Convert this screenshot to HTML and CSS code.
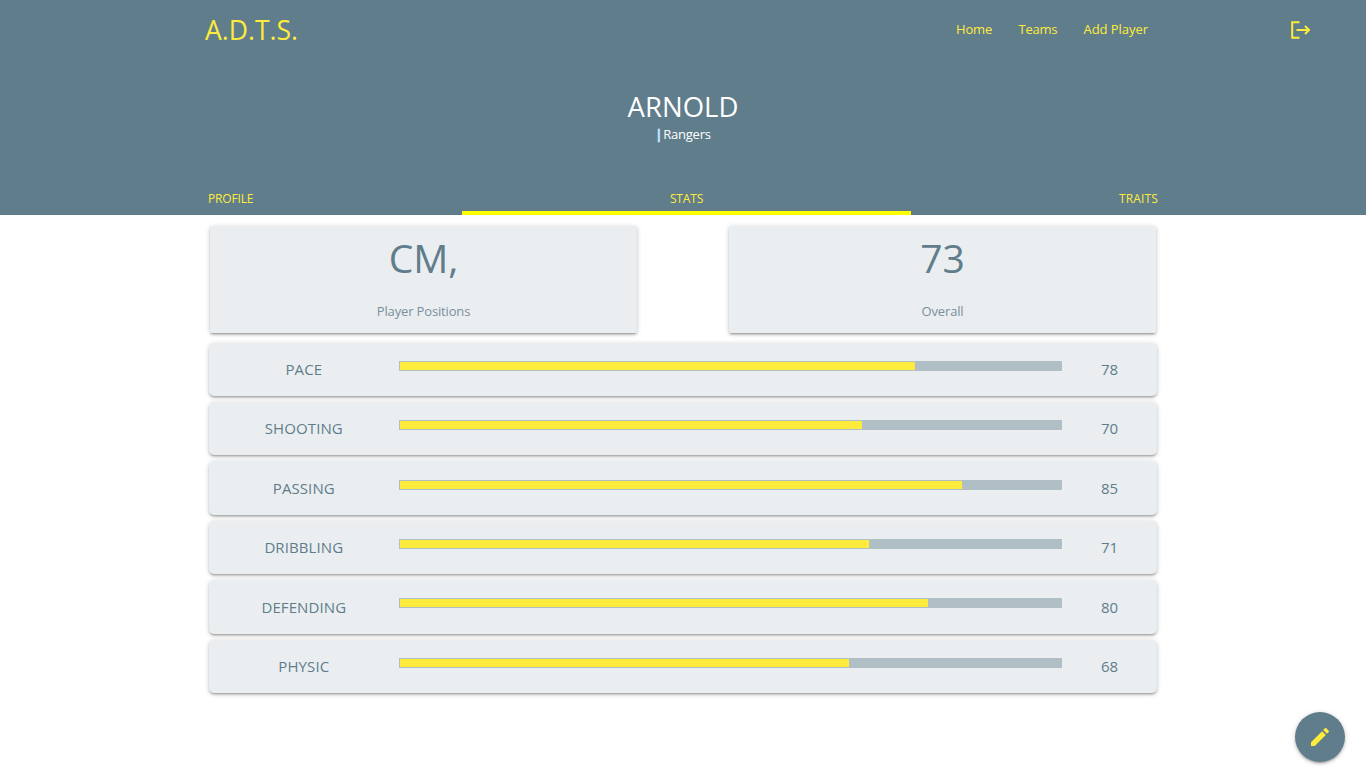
FILE: index.html
```html
<!DOCTYPE html>
<html lang="en">
<head>
<meta charset="utf-8">
<title>A.D.T.S.</title>
<link rel="stylesheet" href="styles.css">
</head>
<body>
<header class="hero">
  <nav class="nav">
    <a class="brand">A.D.T.S.</a>
    <ul class="links">
      <li>Home</li>
      <li class="link-teams">Teams</li>
      <li class="link-add">Add Player</li>
    </ul>
    <svg class="logout" viewBox="0 0 20 18" width="20" height="18" aria-hidden="true"><path d="M8.5 1.2H1.2v15.6h7.3" fill="none" stroke="currentColor" stroke-width="2"/><path d="M5.5 9h12.5M14 5l4 4-4 4" fill="none" stroke="currentColor" stroke-width="2"/></svg>
  </nav>
  <div class="title">
    <h1>ARNOLD</h1>
    <p><span class="bar-mark">|</span> Rangers</p>
  </div>
  <div class="tabs">
    <a class="tab tab-left">PROFILE</a>
    <a class="tab tab-mid active">STATS</a>
    <a class="tab tab-right">TRAITS</a>
  </div>
</header>
<main class="content">
  <section class="summary">
    <div class="card stat-card"><div class="big">CM,</div><div class="cap">Player Positions</div></div>
    <div class="card stat-card"><div class="big">73</div><div class="cap">Overall</div></div>
  </section>
  <section class="rows">
    <div class="card row"><div class="label">PACE</div><div class="track"><div class="fill" style="width:78%"></div></div><div class="val">78</div></div>
    <div class="card row"><div class="label">SHOOTING</div><div class="track"><div class="fill" style="width:70%"></div></div><div class="val">70</div></div>
    <div class="card row"><div class="label">PASSING</div><div class="track"><div class="fill" style="width:85%"></div></div><div class="val">85</div></div>
    <div class="card row"><div class="label">DRIBBLING</div><div class="track"><div class="fill" style="width:71%"></div></div><div class="val">71</div></div>
    <div class="card row"><div class="label">DEFENDING</div><div class="track"><div class="fill" style="width:80%"></div></div><div class="val">80</div></div>
    <div class="card row"><div class="label">PHYSIC</div><div class="track"><div class="fill" style="width:68%"></div></div><div class="val">68</div></div>
  </section>
</main>
<button class="fab" aria-label="Edit"><svg viewBox="0 0 24 24" width="24" height="24" aria-hidden="true"><path fill="currentColor" d="M3 17.25V21h3.75L17.81 9.94l-3.75-3.75L3 17.25zM20.71 7.04a1 1 0 0 0 0-1.41l-2.34-2.34a1 1 0 0 0-1.41 0l-1.83 1.83 3.75 3.75 1.83-1.83z"/></svg></button>
</body>
</html>
```
FILE: styles.css
```css
* { box-sizing: border-box; }
html, body { margin: 0; padding: 0; }
body {
  height: 783px;
  overflow: hidden;
  background: #fff;
  font-family: "Open Sans", "Noto Sans", sans-serif;
  color: #607d8b;
}
.hero { background: #607d8b; height: 215px; display: flex; flex-direction: column; color: #ffeb3b; }
.nav { height: 60px; display: flex; align-items: center; padding-left: 205px; padding-right: 55px; }
.brand { font-size: 26.5px; line-height: 58px; }
.links { list-style: none; display: flex; gap: 26.5px; margin: -2px 0 0 auto; padding: 0; font-size: 13px; letter-spacing: -0.15px; }
.link-teams { letter-spacing: -0.3px; }
.link-add { letter-spacing: -0.05px; }
.logout { margin-left: 143px; margin-top: -1px; color: #ffeb3b; }
.title { text-align: center; color: #fff; margin-top: 31px; height: 51px; }
.title h1 { margin: 0; font-size: 27.5px; font-weight: 400; line-height: 32px; }
.title p { margin: 2px 0 0; font-size: 13px; line-height: 19px; letter-spacing: -0.25px; }
.bar-mark { color: #c8ecff; font-weight: 700; margin-right: -2px; -webkit-text-stroke: 0.5px #c8ecff; }
.tabs { margin-top: auto; height: 48px; display: grid; grid-template-columns: 462px 449px 1fr; font-size: 12px; letter-spacing: -0.15px; }
.tab { display: flex; align-items: center; height: 48px; }
.tab-left { padding-left: 208px; padding-top: 14px; }
.tab-mid { justify-content: center; padding-top: 14px; }
.tab-right { justify-content: flex-end; padding-right: 208px; padding-top: 14px; letter-spacing: 0.15px; }
.active { box-shadow: inset 0 -4px 0 #ffff00; height: 48px; }
.content { width: 948px; margin-left: 209px; }
.card {
  background: #ebeef1;
  border-radius: 2px;
  box-shadow: 0 2px 2px 0 rgba(0,0,0,.14), 0 3px 1px -2px rgba(0,0,0,.12), 0 1px 5px 0 rgba(0,0,0,.2);
}
.summary { display: flex; justify-content: space-between; padding: 11px 1px 0; }
.stat-card { width: 427px; height: 107px; text-align: center; display: flex; flex-direction: column; }
.big { font-size: 39px; line-height: 50px; margin-top: 7px; }
.cap { font-size: 13px; line-height: 18px; margin-top: 19px; color: #78909c; letter-spacing: -0.15px; }
.rows { display: flex; flex-direction: column; gap: 6px; margin-top: 9.6px; }
.row { height: 53.4px; display: grid; grid-template-columns: 20% 70% 10%; align-items: center; border-radius: 5px; font-size: 15px; }
.label { text-align: center; letter-spacing: 0.1px; margin-top: -0.6px; }
.val { text-align: center; margin-top: -0.6px; }
.track { height: 10px; background: #b0bec5; margin-bottom: 7px; border-radius: 1px; }
.fill { height: 100%; background: #ffeb3b; border: 1px solid #b0bec5; }
.fab {
  position: fixed; right: 21px; bottom: 21px;
  width: 50px; height: 50px; border-radius: 50%; border: 0; padding: 0;
  background: #607d8b; color: #ffeb3b;
  display: flex; align-items: center; justify-content: center;
  box-shadow: 0 2px 2px 0 rgba(0,0,0,.14), 0 3px 1px -2px rgba(0,0,0,.12), 0 1px 5px 0 rgba(0,0,0,.2);
}
```
